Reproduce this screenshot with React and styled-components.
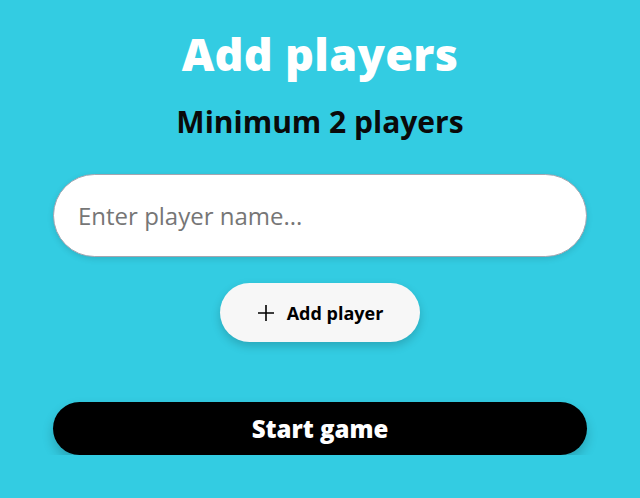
import { useState } from "react";
import styled, { createGlobalStyle } from "styled-components";

const GlobalStyle = createGlobalStyle`
  html, body {
    margin: 0;
    padding: 0;
    background: #33cce2;
    font-family: "Open Sans", "Inter", sans-serif;
  }
`;

const Page = styled.div`
  width: 534px;
  margin: 0 auto;
  padding-top: 26px;
  display: flex;
  flex-direction: column;
  align-items: center;
`;

const Title = styled.h1`
  margin: 0;
  color: #fff;
  font-size: 45px;
  font-weight: 800;
  line-height: 56px;
  letter-spacing: 0.3px;
`;

const Subtitle = styled.h2`
  margin: 22px 0 0;
  color: #0a0a0a;
  font-size: 30px;
  font-weight: 700;
  line-height: 36px;
`;

const NameInput = styled.input`
  box-sizing: border-box;
  margin-top: 34px;
  width: 100%;
  height: 83px;
  border: 1px solid #a5a5b0;
  border-radius: 42px;
  background: #fff;
  padding: 0 24px;
  font-family: inherit;
  font-size: 24px;
  color: #222;
  box-shadow: 0 2px 6px rgba(0, 0, 0, 0.12);
  outline: none;

  &::placeholder {
    color: #767676;
  }
`;

const AddButton = styled.button`
  margin-top: 26px;
  width: 200px;
  height: 59px;
  border: none;
  border-radius: 30px;
  background: #f7f7f7;
  display: flex;
  align-items: center;
  justify-content: center;
  gap: 12px;
  font-family: inherit;
  font-size: 18px;
  font-weight: 700;
  color: #000;
  box-shadow: 0 4px 10px rgba(0, 0, 0, 0.18);
  cursor: pointer;
`;

const StartButton = styled.button`
  margin-top: 60px;
  width: 100%;
  height: 53px;
  border: none;
  border-radius: 27px;
  background: #000;
  color: #fff;
  font-family: inherit;
  font-size: 24px;
  font-weight: 800;
  box-shadow: 0 6px 12px rgba(0, 0, 0, 0.2);
  cursor: pointer;
`;

const PlusIcon = () => (
  <svg width="18" height="18" viewBox="0 0 18 18" fill="none">
    <path d="M9 1v16M1 9h16" stroke="#000" strokeWidth="1.6" />
  </svg>
);

export default function App() {
  const [name, setName] = useState("");

  return (
    <>
      <GlobalStyle />
      <Page>
        <Title>Add players</Title>
        <Subtitle>Minimum 2 players</Subtitle>
        <NameInput
          value={name}
          onChange={(e) => setName(e.target.value)}
          placeholder="Enter player name..."
        />
        <AddButton>
          <PlusIcon />
          Add player
        </AddButton>
        <StartButton>Start game</StartButton>
      </Page>
    </>
  );
}
